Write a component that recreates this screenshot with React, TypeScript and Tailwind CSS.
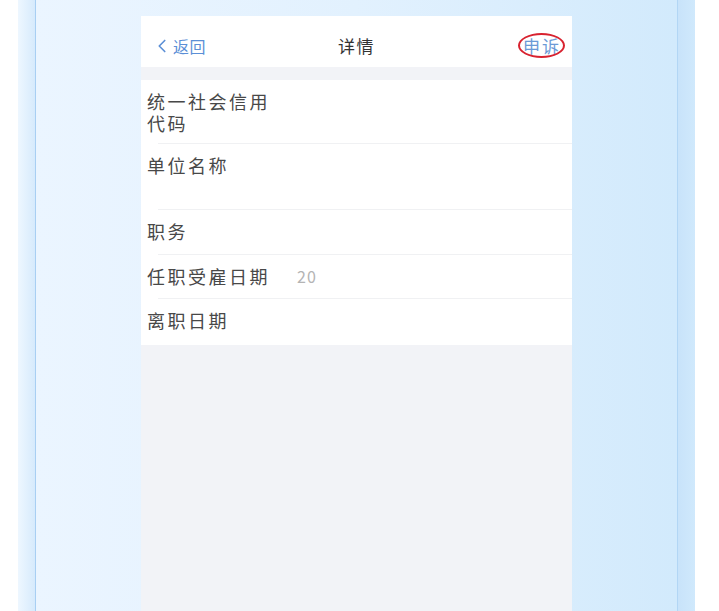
import { ChevronLeft } from "lucide-react";

const rows: { label: string; value?: string; h: string }[] = [
  { label: "统一社会信用代码", h: "h-[64px]" },
  { label: "单位名称", h: "h-[66px]" },
  { label: "职务", h: "h-[45px]" },
  { label: "任职受雇日期", value: "20", h: "h-[44px]" },
  { label: "离职日期", h: "h-[46px]" },
];

function DetailRow({ label, value, h, last }: { label: string; value?: string; h: string; last: boolean }) {
  return (
    <div className={`${h} relative pl-[6px]`}>
      <div className="flex items-start pt-[10px]">
        <div className="w-[150px] shrink-0">
          <div className="w-[126px] text-[18px] leading-[22px] tracking-[2.5px] text-[#484848]">{label}</div>
        </div>
        {value && <span className="text-[16px] leading-[22px] text-[#b4b4b4] tracking-[1px]">{value}</span>}
      </div>
      {!last && <div className="absolute bottom-0 left-[17px] right-0 h-px bg-[#f0f1f3]" />}
    </div>
  );
}

export default function App() {
  return (
    <div
      className="flex h-[611px] w-[719px] bg-white overflow-hidden"
      style={{ fontFamily: '"Noto Sans CJK SC", "Noto Sans", sans-serif' }}
    >
      <div className="w-[18px] shrink-0" />
      <div className="w-[17px] shrink-0 bg-gradient-to-r from-[#eef7ff] to-[#d6eafc]" />
      <div className="w-px shrink-0 bg-[#a8cff3]" />

      <div className="w-[641px] shrink-0 bg-gradient-to-r from-[#ebf5ff] via-[#e2f1fe] to-[#d2eafc] pl-[105px] pt-[16px]">
        <div className="w-[431px] h-[595px] bg-[#f2f3f7] flex flex-col">
          {/* header */}
          <div className="h-[51px] bg-white flex items-center justify-between pl-[14px] pr-[13px] pt-[8px] relative">
            <div className="flex items-center text-[#5b8fd6] text-[16px] leading-none">
              <ChevronLeft size={22} strokeWidth={1.8} className="-ml-[4px]" />
              <span className="tracking-[0.5px]">返回</span>
            </div>
            <div className="absolute left-1/2 top-[8px] bottom-0 flex items-center -translate-x-1/2 text-[17px] text-[#333] tracking-[1.5px]">
              详情
            </div>
            <div className="relative flex items-center justify-center -mr-[4px]">
              <span className="text-[17px] leading-[20px] text-[#6b9ad6] tracking-[2px] pl-[4px] pr-[2px]">申诉</span>
              <div className="absolute -left-[1px] -right-[2px] top-[-3px] bottom-[-2px] rounded-[50%] border-2 border-[#d8222f]" />
            </div>
          </div>
          <div className="h-[13px]" />
          {/* list */}
          <div className="bg-white">
            {rows.map((r, i) => (
              <DetailRow key={r.label} label={r.label} value={r.value} h={r.h} last={i === rows.length - 1} />
            ))}
          </div>
        </div>
      </div>

      <div className="w-px shrink-0 bg-[#b2d6f5]" />
      <div className="w-[17px] shrink-0 bg-gradient-to-r from-[#c8e3fa] to-[#d0e9fc]" />
      <div className="flex-1" />
    </div>
  );
}
